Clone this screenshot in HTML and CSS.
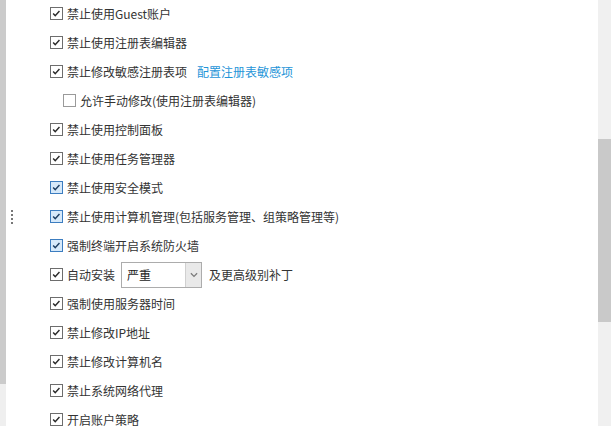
FILE: index.html
```html
<!DOCTYPE html>
<html lang="zh-CN">
<head>
    <meta charset="UTF-8">
    <title>策略设置</title>
    <link rel="stylesheet" href="styles.css">
</head>
<body>
    <div class="page">
        <div class="side-bar"></div>
        <div class="grip">
            <span></span><span></span><span></span><span></span>
        </div>

        <div class="options">
            <div class="row">
                <span class="cb checked"><svg viewBox="0 0 13 13"><polyline points="2.5,6.5 5,9 10,3.5"/></svg></span>
                <span class="label">禁止使用Guest账户</span>
            </div>
            <div class="row">
                <span class="cb checked"><svg viewBox="0 0 13 13"><polyline points="2.5,6.5 5,9 10,3.5"/></svg></span>
                <span class="label">禁止使用注册表编辑器</span>
            </div>
            <div class="row">
                <span class="cb checked"><svg viewBox="0 0 13 13"><polyline points="2.5,6.5 5,9 10,3.5"/></svg></span>
                <span class="label">禁止修改敏感注册表项</span>
                <a class="link" href="#">配置注册表敏感项</a>
            </div>
            <div class="row sub">
                <span class="cb"></span>
                <span class="label">允许手动修改(使用注册表编辑器)</span>
            </div>
            <div class="row">
                <span class="cb checked"><svg viewBox="0 0 13 13"><polyline points="2.5,6.5 5,9 10,3.5"/></svg></span>
                <span class="label">禁止使用控制面板</span>
            </div>
            <div class="row">
                <span class="cb checked"><svg viewBox="0 0 13 13"><polyline points="2.5,6.5 5,9 10,3.5"/></svg></span>
                <span class="label">禁止使用任务管理器</span>
            </div>
            <div class="row">
                <span class="cb checked hover"><svg viewBox="0 0 13 13"><polyline points="2.5,6.5 5,9 10,3.5"/></svg></span>
                <span class="label">禁止使用安全模式</span>
            </div>
            <div class="row">
                <span class="cb checked hover"><svg viewBox="0 0 13 13"><polyline points="2.5,6.5 5,9 10,3.5"/></svg></span>
                <span class="label">禁止使用计算机管理(包括服务管理、组策略管理等)</span>
            </div>
            <div class="row">
                <span class="cb checked hover"><svg viewBox="0 0 13 13"><polyline points="2.5,6.5 5,9 10,3.5"/></svg></span>
                <span class="label">强制终端开启系统防火墙</span>
            </div>
            <div class="row">
                <span class="cb checked"><svg viewBox="0 0 13 13"><polyline points="2.5,6.5 5,9 10,3.5"/></svg></span>
                <span class="label">自动安装</span>
                <div class="select">
                    <span class="select-value">严重</span>
                    <span class="select-arrow"><svg viewBox="0 0 9 6"><polyline points="1,1 4.5,4.5 8,1"/></svg></span>
                </div>
                <span class="label">及更高级别补丁</span>
            </div>
            <div class="row">
                <span class="cb checked"><svg viewBox="0 0 13 13"><polyline points="2.5,6.5 5,9 10,3.5"/></svg></span>
                <span class="label">强制使用服务器时间</span>
            </div>
            <div class="row">
                <span class="cb checked"><svg viewBox="0 0 13 13"><polyline points="2.5,6.5 5,9 10,3.5"/></svg></span>
                <span class="label">禁止修改IP地址</span>
            </div>
            <div class="row">
                <span class="cb checked"><svg viewBox="0 0 13 13"><polyline points="2.5,6.5 5,9 10,3.5"/></svg></span>
                <span class="label">禁止修改计算机名</span>
            </div>
            <div class="row">
                <span class="cb checked"><svg viewBox="0 0 13 13"><polyline points="2.5,6.5 5,9 10,3.5"/></svg></span>
                <span class="label">禁止系统网络代理</span>
            </div>
            <div class="row">
                <span class="cb checked"><svg viewBox="0 0 13 13"><polyline points="2.5,6.5 5,9 10,3.5"/></svg></span>
                <span class="label">开启账户策略</span>
            </div>
        </div>

        <div class="scrollbar">
            <div class="thumb"></div>
        </div>
    </div>
</body>
</html>
```

FILE: styles.css
```css
* {
    margin: 0;
    padding: 0;
    box-sizing: border-box;
}

html, body {
    width: 611px;
    height: 426px;
    overflow: hidden;
    background: #fff;
}

body {
    font-family: "Microsoft YaHei", "Noto Sans CJK SC", sans-serif;
    font-size: 12px;
    color: #333;
}

.page {
    position: relative;
    display: flex;
    height: 426px;
}

.side-bar {
    width: 6px;
    flex-shrink: 0;
    background: linear-gradient(to bottom, #cbcbcb 0, #cbcbcb 384px, #efefef 384px);
}

/* drag handle dots */
.grip {
    position: absolute;
    left: 11px;
    top: 210px;
    display: flex;
    flex-direction: column;
    gap: 2px;
}

.grip span {
    width: 2px;
    height: 2px;
    background: #777;
}

.options {
    flex: 1;
    padding-left: 44px;
    margin-top: -1px;
}

.row {
    height: 29px;
    display: flex;
    align-items: center;
    white-space: nowrap;
}

.row.sub {
    padding-left: 13px;
}

.cb {
    width: 13px;
    height: 13px;
    border: 1px solid #6d6d6d;
    background: #fff;
    margin-right: 4px;
    flex-shrink: 0;
    display: flex;
    align-items: center;
    justify-content: center;
}

.row.sub .cb {
    border-color: #9a9a9a;
}

.cb svg {
    width: 11px;
    height: 11px;
    fill: none;
    stroke: #2b2b2b;
    stroke-width: 1.7;
}

.cb.hover {
    border-color: #3c7dc0;
    background: #d6e9fa;
}

.cb.hover svg {
    stroke: #1d3e63;
}

.label {
    line-height: 16px;
}

.link {
    margin-left: 10px;
    color: #1f95d8;
    text-decoration: none;
}

.select {
    display: flex;
    width: 81px;
    height: 26px;
    margin: 0 7px 0 6px;
    border: 1px solid #acacac;
    background: #fff;
}

.select-value {
    flex: 1;
    padding-left: 5px;
    line-height: 24px;
    color: #222;
}

.select-arrow {
    width: 16px;
    background: #e9e9e9;
    border-left: 1px solid #d0d0d0;
    display: flex;
    align-items: center;
    justify-content: center;
}

.select-arrow svg {
    width: 8px;
    height: 6px;
    fill: none;
    stroke: #7a7a7a;
    stroke-width: 1.4;
}

.scrollbar {
    width: 13px;
    flex-shrink: 0;
    background: #f0f0f0;
    padding-top: 139px;
}

.thumb {
    height: 183px;
    background: #c9c9c9;
}
```
